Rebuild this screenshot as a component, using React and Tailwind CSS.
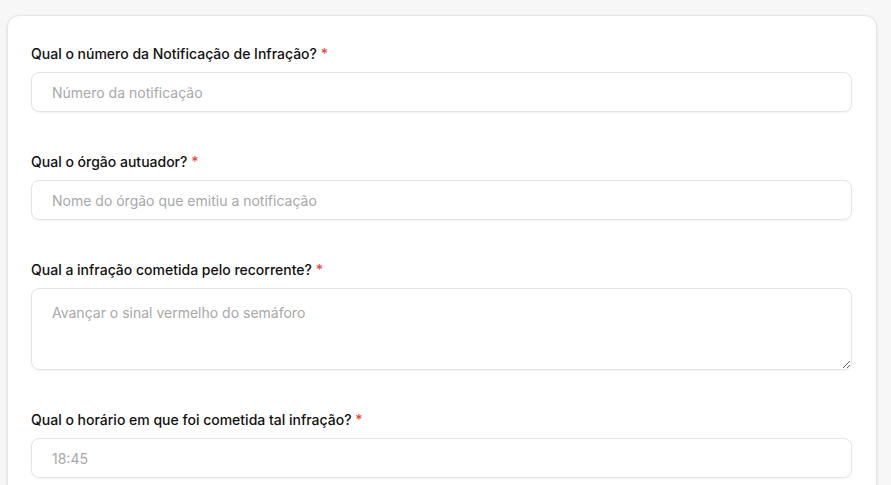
const fields = [
  { label: "Qual o número da Notificação de Infração?", placeholder: "Número da notificação" },
  { label: "Qual o órgão autuador?", placeholder: "Nome do órgão que emitiu a notificação" },
  { label: "Qual a infração cometida pelo recorrente?", placeholder: "Avançar o sinal vermelho do semáforo", multiline: true },
  { label: "Qual o horário em que foi cometida tal infração?", placeholder: "18:45" },
];

const App = () => {
  return (
    <div className="min-h-screen bg-[#f7f7f7] pt-[15px] pl-[7px] pr-[14px] font-['Inter','Liberation_Sans',sans-serif]">
      <div className="bg-white border border-[#e6e6e6] rounded-xl shadow-sm pl-[23px] pr-6 pt-[28px] pb-10 flex flex-col gap-10">
        {fields.map((f) => (
          <div key={f.label} className="flex flex-col gap-2">
            <label className="text-sm leading-5 font-medium text-[#111]">
              {f.label} <span className="text-[#ef4444]">*</span>
            </label>
            {f.multiline ? (
              <textarea
                rows={3}
                placeholder={f.placeholder}
                className="h-[82px] w-full rounded-lg border border-[#e5e5e5] px-5 py-[14px] text-sm text-[#111] placeholder:text-[#a8a8a8] shadow-xs outline-none"
              />
            ) : (
              <input
                type="text"
                placeholder={f.placeholder}
                className="h-10 w-full rounded-lg border border-[#e5e5e5] px-5 text-sm text-[#111] placeholder:text-[#a8a8a8] shadow-xs outline-none"
              />
            )}
          </div>
        ))}
      </div>
    </div>
  );
};

export default App;
